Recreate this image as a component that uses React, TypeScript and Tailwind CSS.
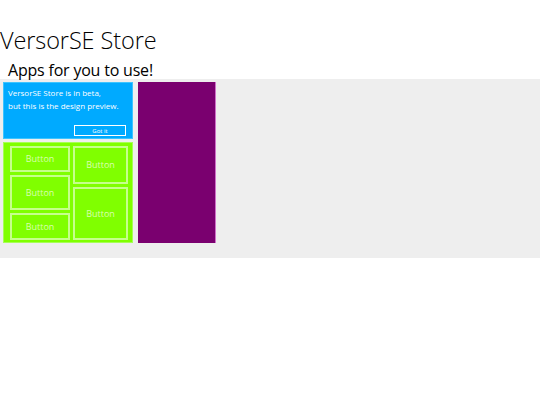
const font = { fontFamily: '"Open Sans", "Liberation Sans", sans-serif' };

function TileButton({ label, className }: { label: string; className: string }) {
  return (
    <button
      className={`flex items-center justify-center border-2 border-[#c6ff8c] text-[9px] text-[#d9ffb0] ${className}`}
    >
      {label}
    </button>
  );
}

export default function App() {
  return (
    <div className="min-h-[405px] w-[540px] bg-white text-black" style={font}>
      <h1 className="pt-[26px] text-[23.5px] font-light leading-[28px] tracking-[-0.1px]">VersorSE Store</h1>
      <h2 className="pl-2 pt-[7px] text-[16px] leading-[18px] tracking-[-0.2px]">Apps for you to use!</h2>

      <div className="flex h-[179px] gap-[5px] bg-[#eeeeee] px-[3px] pt-[3px]">
        <div className="flex w-[130px] flex-col gap-[3px]">
          <div className="flex h-[57px] flex-col border border-[#3cc4ff] bg-[#00aaff] pl-1 pr-[6px] pt-[3px] pb-[2px] text-white">
            <p className="text-[8px] leading-[13px]">VersorSE Store is in beta,</p>
            <p className="text-[8px] leading-[13px]">but this is the design preview.</p>
            <button className="ml-auto mt-auto h-[11px] w-[52px] border border-white text-[6px] leading-none">
              Got it
            </button>
          </div>

          <div className="flex h-[101px] gap-[3px] border border-[#a6ff55] bg-[#80ff00] pl-[6px] pr-1 pt-[3px]">
            <div className="flex w-[60px] flex-col gap-[3px]">
              <TileButton label="Button" className="h-[26px]" />
              <TileButton label="Button" className="h-[35px]" />
              <TileButton label="Button" className="h-[27px]" />
            </div>
            <div className="flex w-[55px] flex-col gap-[3px]">
              <TileButton label="Button" className="h-[38px]" />
              <TileButton label="Button" className="h-[53px]" />
            </div>
          </div>
        </div>

        <div className="h-[161px] w-[78px] border-r border-[#d070c8] bg-[#7a006f]" />
      </div>
    </div>
  );
}
